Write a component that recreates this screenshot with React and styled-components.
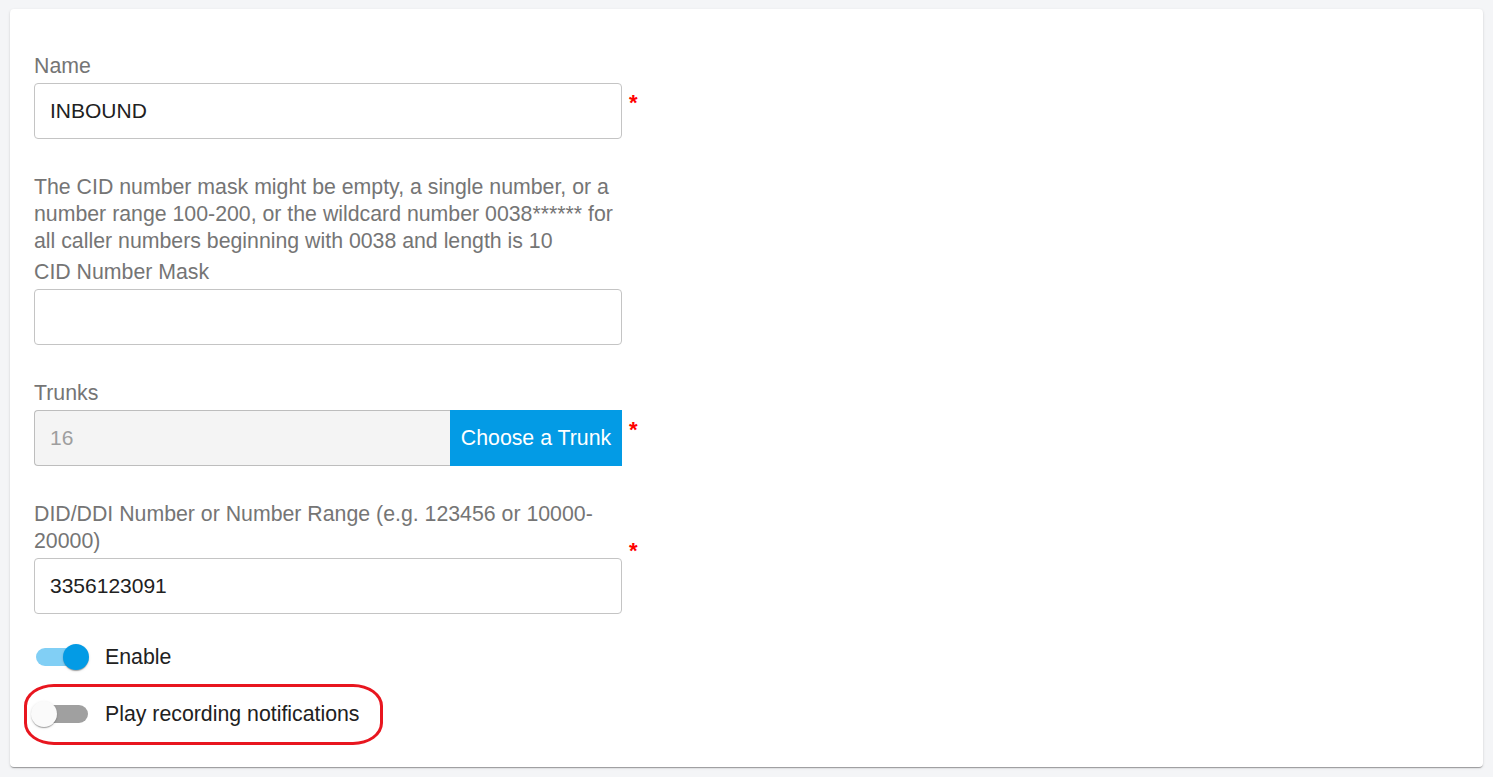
import React, { useState } from 'react';
import styled, { createGlobalStyle } from 'styled-components';

const GlobalStyle = createGlobalStyle`
  * {
    box-sizing: border-box;
  }

  body {
    margin: 0;
    background-color: #f4f5f7;
    font-family: 'Liberation Sans', Arial, sans-serif;
  }
`;

function Switch({ checked, onChange }) {
  return (
    <SwitchBase onClick={() => onChange(!checked)}>
      <SwitchTrack checked={checked} />
      <SwitchKnob checked={checked} />
    </SwitchBase>
  );
}

function App() {
  const [enabled, setEnabled] = useState(true);
  const [playRecording, setPlayRecording] = useState(false);

  return (
    <Page>
      <GlobalStyle />
      <Card>
        <Form>
          <Field>
            <FieldBody>
              <Label>Name</Label>
              <TextInput type="text" defaultValue="INBOUND" />
            </FieldBody>
            <Asterisk>*</Asterisk>
          </Field>

          <Field>
            <FieldBody>
              <HelpText>
                The CID number mask might be empty, a single number, or a number range 100-200, or
                the wildcard number 0038****** for all caller numbers beginning with 0038 and
                length is 10
              </HelpText>
              <Label>CID Number Mask</Label>
              <TextInput type="text" defaultValue="" />
            </FieldBody>
            <AsteriskSpace />
          </Field>

          <Field>
            <FieldBody>
              <Label>Trunks</Label>
              <InputGroup>
                <ReadOnlyInput type="text" value="16" readOnly />
                <ChooseButton type="button">Choose a Trunk</ChooseButton>
              </InputGroup>
            </FieldBody>
            <Asterisk>*</Asterisk>
          </Field>

          <Field>
            <FieldBody>
              <Label>DID/DDI Number or Number Range (e.g. 123456 or 10000-20000)</Label>
              <TextInput type="text" defaultValue="3356123091" />
            </FieldBody>
            <Asterisk>*</Asterisk>
          </Field>

          <SwitchList>
            <SwitchRow>
              <Switch checked={enabled} onChange={setEnabled} />
              <SwitchLabel>Enable</SwitchLabel>
            </SwitchRow>
            <SwitchRow>
              <Switch checked={playRecording} onChange={setPlayRecording} />
              <SwitchLabel>Play recording notifications</SwitchLabel>
            </SwitchRow>
          </SwitchList>
        </Form>

        <Highlight />
      </Card>
    </Page>
  );
}

export default App;

const Page = styled.div`
  width: 100%;
  min-height: 100vh;
  padding: 9px 10px 10px;
`;

const Card = styled.div`
  position: relative;
  width: 100%;
  padding: 42px 24px 29px;

  background-color: #ffffff;
  border-radius: 4px;
  box-shadow: 0 2px 1px -1px rgba(0, 0, 0, 0.2), 0 1px 1px 0 rgba(0, 0, 0, 0.14),
    0 1px 3px 0 rgba(0, 0, 0, 0.12);
`;

const Form = styled.div`
  display: flex;
  flex-direction: column;
  gap: 33px;
`;

const Field = styled.div`
  display: flex;
  align-items: flex-start;
`;

const FieldBody = styled.div`
  width: 588px;

  display: flex;
  flex-direction: column;
`;

const Label = styled.label`
  padding-top: 2px;
  margin-bottom: 3px;

  font-size: 21.3px;
  line-height: 27px;
  color: #757575;
`;

const HelpText = styled.p`
  margin: 0 0 2px;
  padding-top: 2px;

  font-size: 21.3px;
  line-height: 27px;
  color: #757575;
`;

const TextInput = styled.input`
  width: 100%;
  height: 56px;
  padding: 0 15px;

  border: 1px solid #c4c4c4;
  border-radius: 4px;
  background-color: #ffffff;

  font-family: 'Liberation Sans', Arial, sans-serif;
  font-size: 21px;
  color: #212121;

  &:focus {
    outline: none;
  }
`;

const InputGroup = styled.div`
  width: 100%;
  height: 56px;

  display: flex;
`;

const ReadOnlyInput = styled.input`
  flex: 1;
  min-width: 0;
  height: 100%;
  padding: 0 15px;

  border: 1px solid #bdbdbd;
  border-right: none;
  border-radius: 4px 0 0 4px;
  background-color: #f4f4f4;

  font-family: 'Liberation Sans', Arial, sans-serif;
  font-size: 21px;
  color: #9e9e9e;

  &:focus {
    outline: none;
  }
`;

const ChooseButton = styled.button`
  width: 172px;
  height: 100%;
  padding: 0;

  border: none;
  border-radius: 0;
  background-color: #039be5;

  font-family: 'Liberation Sans', Arial, sans-serif;
  font-size: 21.3px;
  color: #ffffff;
  cursor: pointer;
`;

const Asterisk = styled.span`
  margin: ${({ offset = 41 }) => `${offset}px`} 0 0 7px;

  font-size: 22px;
  font-weight: bold;
  line-height: 22px;
  color: #ff0000;
`;

const AsteriskSpace = styled.span`
  width: 15px;
`;

const SwitchList = styled.div`
  margin-top: -14px;

  display: flex;
  flex-direction: column;
  gap: 9px;
`;

const SwitchRow = styled.div`
  height: 48px;

  display: flex;
  align-items: center;
  gap: 14px;
`;

const SwitchBase = styled.span`
  position: relative;
  width: 60px;
  height: 28px;
  margin-left: -3px;

  display: flex;
  align-items: center;
  cursor: pointer;
`;

const SwitchTrack = styled.span`
  width: 52px;
  height: 18px;
  margin-left: 5px;

  border-radius: 9px;
  background-color: ${({ checked }) => (checked ? '#81cff5' : '#a0a0a0')};
`;

const SwitchKnob = styled.span`
  position: absolute;
  top: 1px;
  left: ${({ checked }) => (checked ? '32px' : '0')};
  width: 26px;
  height: 26px;

  border-radius: 50%;
  background-color: ${({ checked }) => (checked ? '#039be5' : '#fafafa')};
  box-shadow: 0 2px 1px -1px rgba(0, 0, 0, 0.2), 0 1px 1px 0 rgba(0, 0, 0, 0.14),
    0 1px 3px 0 rgba(0, 0, 0, 0.12);
`;

const SwitchLabel = styled.span`
  font-size: 21.3px;
  color: #212121;
`;

const Highlight = styled.div`
  position: absolute;
  left: 14px;
  top: 675px;
  width: 359px;
  height: 61px;

  border: 3px solid #e8161f;
  border-radius: 30px / 22px;
  pointer-events: none;
`;
